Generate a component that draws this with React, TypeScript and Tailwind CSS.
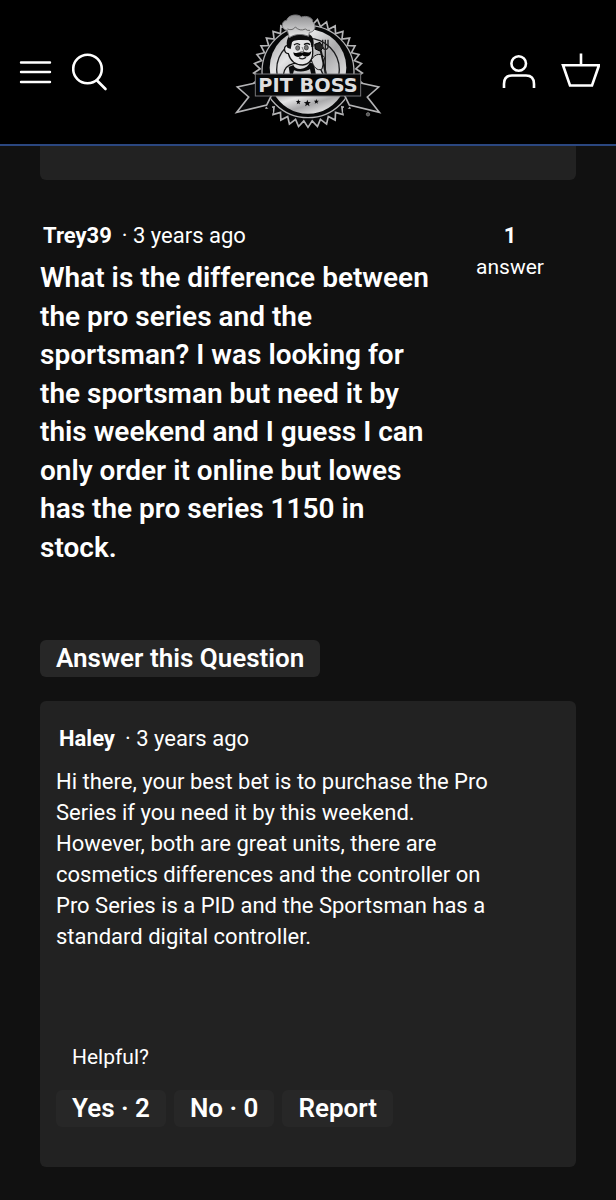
import type { ReactNode } from 'react'

const CENTER = { x: 234, y: 198 }

// zigzag edge of the badge
function burst(teeth: number, outer: number, inner: number) {
  const points: string[] = []
  for (let i = 0; i < teeth * 2; i++) {
    const r = i % 2 === 0 ? outer : inner
    const a = (Math.PI * i) / teeth + Math.PI / 2
    points.push(`${(CENTER.x + r * Math.cos(a)).toFixed(1)},${(CENTER.y + r * Math.sin(a)).toFixed(1)}`)
  }
  return points.join(' ')
}

function star(cx: number, cy: number, r: number) {
  const points: string[] = []
  for (let i = 0; i < 10; i++) {
    const radius = i % 2 === 0 ? r : r * 0.42
    const a = (Math.PI * i) / 5 - Math.PI / 2
    points.push(`${(cx + radius * Math.cos(a)).toFixed(1)},${(cy + radius * Math.sin(a)).toFixed(1)}`)
  }
  return points.join(' ')
}

function Logo() {
  return (
    <svg viewBox="0 0 468 390" className="h-[130px] w-[156px]" role="img" aria-label="Pit Boss">
      <defs>
        <linearGradient id="silver" x1="0" y1="0" x2="1" y2="1">
          <stop offset="0" stopColor="#9a9a9c" />
          <stop offset="0.3" stopColor="#e4e4e5" />
          <stop offset="0.55" stopColor="#a9a9ab" />
          <stop offset="0.8" stopColor="#dededf" />
          <stop offset="1" stopColor="#a0a0a2" />
        </linearGradient>
        <linearGradient id="hat" x1="0" y1="0" x2="0" y2="1">
          <stop offset="0" stopColor="#8d8d8f" />
          <stop offset="1" stopColor="#e9e9ea" />
        </linearGradient>
      </defs>
      <polygon points={burst(36, 163, 144)} fill="#060708" stroke="#b4b4b6" strokeWidth="5" strokeLinejoin="miter" />
      <circle cx="234" cy="194" r="138" fill="#060708" stroke="#b4b4b6" strokeWidth="4" />
      <circle cx="234" cy="182" r="115" fill="url(#silver)" />
      <circle cx="234" cy="188" r="94" fill="none" stroke="#1b1c1e" strokeWidth="4" />
      <path d="M130 256H338A116 116 0 0 1 130 256Z" fill="url(#silver)" />

      {/* shoulders, arm and apron */}
      <path d="M160 204C162 184 172 174 190 170L244 162C258 168 270 178 280 204Z" fill="#dcdcdd" stroke="#111" strokeWidth="4" />
      <path d="M180 204L176 180L190 174C196 190 228 192 240 166L252 172L258 204Z" fill="#0b0c0d" />
      <path d="M188 204L192 190C208 196 230 194 240 186L244 204Z" fill="#c9c9ca" />
      <path d="M244 158C256 138 276 138 284 152L276 186C262 194 250 180 244 158Z" fill="#d4d4d5" stroke="#111" strokeWidth="3" />

      {/* spatula and fork */}
      <path d="M254 112L270 106L280 122L270 132L256 126Z" fill="#222" stroke="#000" strokeWidth="3" />
      <path d="M272 130L288 202" stroke="#111" strokeWidth="6" />
      <path d="M278 98V122Q286 134 294 122V98M286 98V202" fill="none" stroke="#222" strokeWidth="4" />

      {/* head */}
      <path d="M173 116C160 114 160 138 175 140C180 158 194 174 218 174C240 172 250 154 248 130L246 98L178 96Z" fill="#e6e6e7" stroke="#111" strokeWidth="4" />
      <path d="M172 122C166 100 176 82 190 80H234C248 84 254 100 250 120L244 120C244 104 236 96 222 96C206 100 192 98 186 106L182 126Z" fill="#0a0a0b" />
      <path d="M192 114Q202 106 210 114M222 113Q232 106 240 113" fill="none" stroke="#111" strokeWidth="4" />
      <ellipse cx="203" cy="123" rx="6" ry="7" fill="#777" stroke="#222" strokeWidth="2" />
      <ellipse cx="229" cy="122" rx="6" ry="7" fill="#777" stroke="#222" strokeWidth="2" />
      <path d="M216 120L222 134H211" fill="none" stroke="#444" strokeWidth="2" />
      <path d="M190 136C198 142 206 132 216 137C226 131 234 142 244 132C243 150 226 152 217 145C206 154 190 150 190 136Z" fill="#050505" />
      <path d="M207 152Q218 160 228 151" fill="none" stroke="#222" strokeWidth="4" />

      {/* hat */}
      <path d="M178 92L172 70C152 68 152 42 170 40C174 22 206 20 214 30C232 24 250 34 248 44C262 56 254 76 238 76L236 88C216 80 196 80 178 92Z" fill="url(#hat)" stroke="#77777a" strokeWidth="3" />
      <path d="M172 66Q188 72 196 60Q210 74 226 66Q232 72 240 70" fill="none" stroke="#666" strokeWidth="3" />

      {/* ribbon tails and banner */}
      <path d="M78 228L22 240L56 270L20 316L106 296L130 320L120 266H78Z" fill="#060708" stroke="none" />
      <path d="M76 228L22 240L56 270L20 316L110 294L124 266" fill="none" stroke="#b4b4b6" strokeWidth="5" />
      <path d="M392 228L446 240L412 270L448 316L362 296L338 320L348 266H390Z" fill="#060708" stroke="none" />
      <path d="M392 228L446 240L412 270L448 316L358 294L344 266" fill="none" stroke="#b4b4b6" strokeWidth="5" />
      <rect x="76" y="201" width="316" height="66" fill="#060708" stroke="#77777a" strokeWidth="3" />
      <text x="234" y="254" textAnchor="middle" fontFamily="'DejaVu Sans', sans-serif" fontSize="58" fontWeight="700" fill="#dededf">
        PIT BOSS
      </text>
      <polygon points={star(205, 285, 8)} fill="#0a0a0b" />
      <polygon points={star(232, 289, 11)} fill="#0a0a0b" />
      <polygon points={star(259, 284, 8)} fill="#0a0a0b" />
      <circle cx="414" cy="322" r="5" fill="#555" stroke="#777" strokeWidth="3" />
    </svg>
  )
}

function IconButton({ label, children }: { label: string; children: ReactNode }) {
  return (
    <button type="button" aria-label={label} className="block">
      {children}
    </button>
  )
}

function Header() {
  return (
    <header className="grid h-[146px] grid-cols-[1fr_auto_1fr] items-center border-b-2 border-[#2b4780] bg-black px-4 text-white">
      <div className="flex items-center gap-4">
        <IconButton label="Menu">
          <svg viewBox="0 0 40 40" className="h-10 w-10" fill="none" stroke="currentColor" strokeWidth="2.4" strokeLinecap="round">
            <path d="M5 10.5H34M5 20H34M5 30H34" />
          </svg>
        </IconButton>
        <IconButton label="Search">
          <svg viewBox="0 0 40 40" className="h-10 w-10" fill="none" stroke="currentColor" strokeWidth="2.6" strokeLinecap="round">
            <circle cx="15.5" cy="17" r="14.3" />
            <path d="M25 28.5L33.5 37" />
          </svg>
        </IconButton>
      </div>
      <a href="#" aria-label="Pit Boss home">
        <Logo />
      </a>
      <div className="flex items-center justify-end gap-5">
        <IconButton label="Account">
          <svg viewBox="0 0 40 40" className="h-10 w-10" fill="none" stroke="currentColor" strokeWidth="2.6">
            <circle cx="18.7" cy="11.5" r="7.3" />
            <path d="M4 36V32Q4 23.5 12 23.5H26Q34 23.5 34 32V36" />
          </svg>
        </IconButton>
        <IconButton label="Cart">
          <svg viewBox="0 0 40 40" className="h-10 w-10" fill="none" stroke="currentColor" strokeWidth="2.6">
            <path d="M21 1.5V13M3 13.3H39L32 33.5H10Z" />
          </svg>
        </IconButton>
      </div>
    </header>
  )
}

function Byline({ name, when }: { name: string; when: string }) {
  return (
    <p className="px-[3px] text-[22px] leading-[30px]">
      <a href="#" className="mr-[10px] font-bold">
        {name}
      </a>
      · {when}
    </p>
  )
}

function ActionButton({ children }: { children: ReactNode }) {
  return (
    <button type="button" className="block rounded-md bg-[#272727] px-4 text-[26px] font-semibold leading-[37px]">
      {children}
    </button>
  )
}

function Answer() {
  return (
    <article className="mt-6 rounded-md bg-[#222222] px-4 pt-[23px] pb-10">
      <Byline name="Haley" when="3 years ago" />
      <p className="mt-3 pr-14 text-[22px] leading-[31px]">
        Hi there, your best bet is to purchase the Pro Series if you need it by this weekend.
        <br />
        However, both are great units, there are cosmetics differences and the controller on Pro Series is a PID and
        the Sportsman has a standard digital controller.
      </p>
      <p className="mt-[90px] px-4 text-[21px] leading-[30px]">Helpful?</p>
      <div className="mt-[18px] flex gap-2">
        <ActionButton>Yes · 2</ActionButton>
        <ActionButton>No · 0</ActionButton>
        <ActionButton>Report</ActionButton>
      </div>
    </article>
  )
}

export default function App() {
  return (
    <div className="min-h-screen bg-[#111111] font-[Roboto,sans-serif] text-white">
      <Header />
      <main className="px-10 pb-8">
        <div className="h-[34px] rounded-b-md bg-[#222222]" />
        <section className="mt-[41px] flex gap-2">
          <div className="min-w-0 flex-1">
            <Byline name="Trey39" when="3 years ago" />
            <h2 className="mt-2 text-[28px] font-semibold leading-snug">
              What is the difference between the pro series and the sportsman? I was looking for the sportsman but need
              it by this weekend and I guess I can only order it online but lowes has the pro series 1150 in stock.
            </h2>
          </div>
          <p className="w-[132px] text-center text-[21px] leading-[32px]">
            <span className="block text-[22px] font-bold leading-[30px]">1</span>
            answer
          </p>
        </section>
        <div className="mt-[73px]">
          <ActionButton>Answer this Question</ActionButton>
        </div>
        <Answer />
      </main>
    </div>
  )
}
